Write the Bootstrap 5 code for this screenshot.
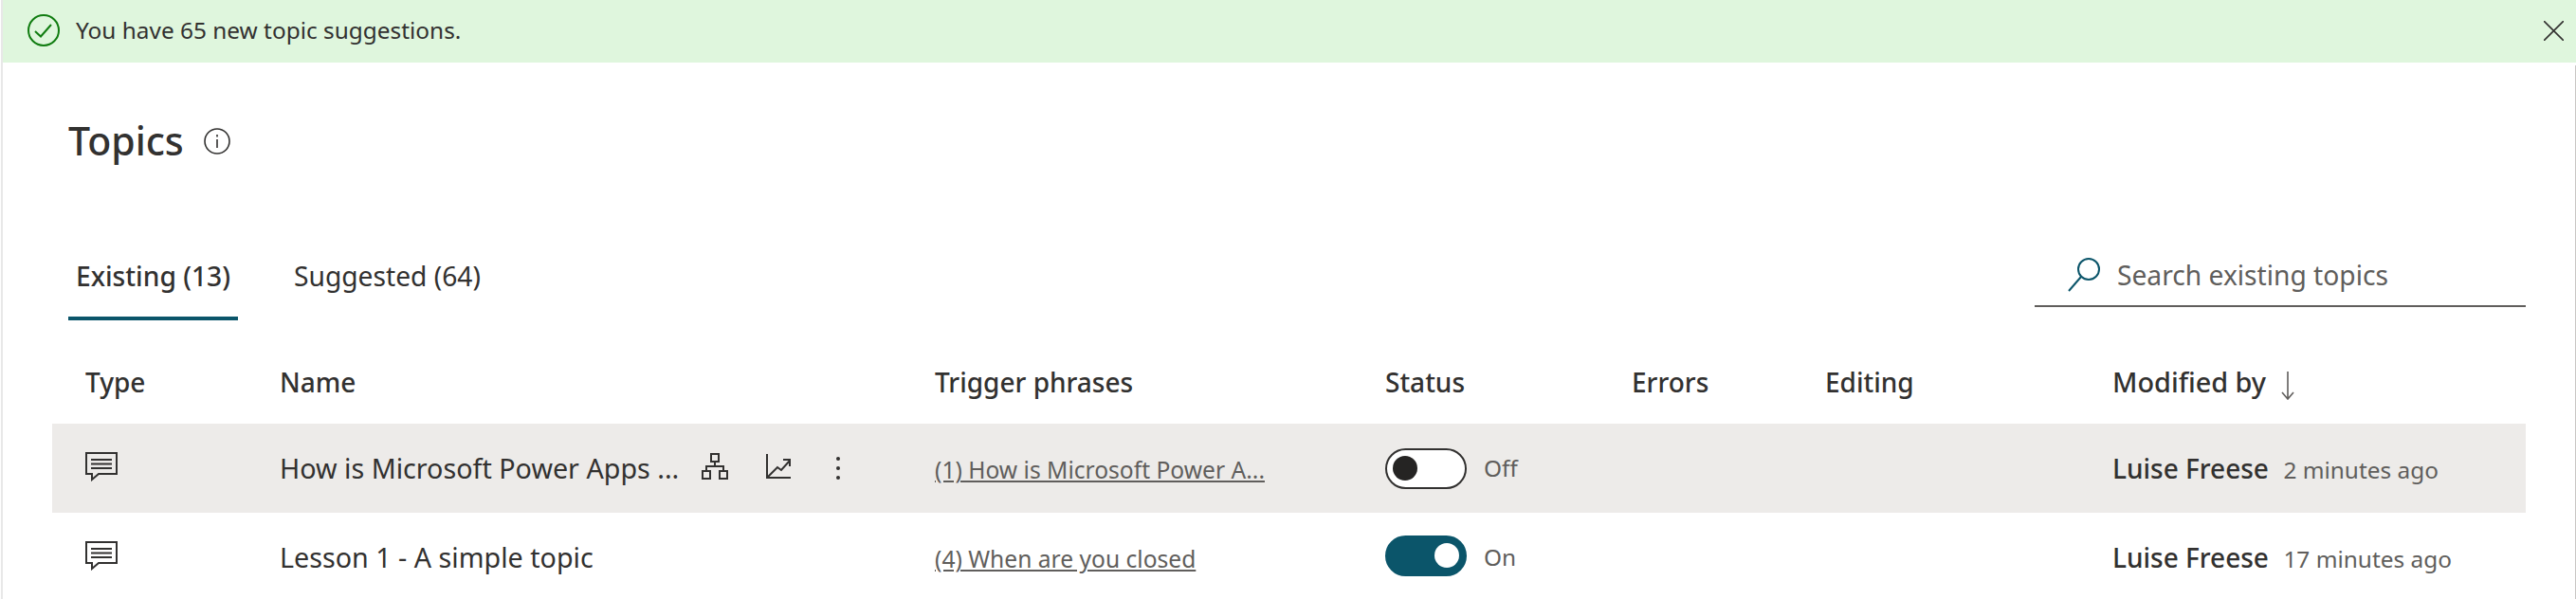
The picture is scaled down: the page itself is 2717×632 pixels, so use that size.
<!DOCTYPE html>
<html lang="en">
<head>
<meta charset="UTF-8">
<title>Topics</title>
<link href="https://cdn.jsdelivr.net/npm/bootstrap@5.3.0/dist/css/bootstrap.min.css" rel="stylesheet">
<style>
html, body { height: 100%; overflow: hidden; }
body { font-family: "Noto Sans", "Open Sans", sans-serif; color: #323130; font-size: 28.2px; background: #fff; }
.page-frame { height: 632px; margin-left: 1px; border-left: 2px solid #e8e8e8; }
.success-bar { height: 66px; background: #dff6dd; padding: 0 13px 2px 26px; gap: 17px; font-size: 24.4px; }
.success-bar .close-x { margin-left: auto; }
.page-body { margin-top: 3px; border-right: 1px solid #c8c6c4; height: 563px; }
.topics-title { padding: 7px 0 0 69px; height: 153px; gap: 21px; }
.topics-title h1 { font-size: 41px; font-weight: 500; margin: 0 0 2px; line-height: 54px; }
.tab-row { padding: 0 52px 0 69px; height: 116px; }
.topic-tab { padding: 42px 8px 0; height: 116px; line-height: 54px; margin-right: 51px; position: relative; }
.topic-tab.active-tab { font-weight: 500; }
.topic-tab.active-tab::after { content: ""; position: absolute; left: 0; right: 0; bottom: 0; height: 4px; background: #0b556a; }
.search-box { width: 518px; height: 72px; margin-top: 30px; border-bottom: 2px solid #605e5c; padding: 6px 0 0 35px; gap: 18px; color: #605e5c; }
.topics-table { table-layout: fixed; width: 2609px; margin: 0 0 0 52px; border-collapse: collapse; }
.topics-table th { font-weight: 500; font-size: 28px; height: 109px; padding: 21px 0 0; vertical-align: middle; }
.topics-table th.sorted-head { font-size: 28.8px; }
.topics-table td { height: 94px; padding: 0; vertical-align: middle; font-size: 28.7px; }
.topics-table .first-cell { padding-left: 35px; }
.row-hover td { background: #edebe9; }
.name-cell { gap: 24px; }
.phrase-link { color: #605e5c; font-size: 24.6px; text-decoration: underline; }
.status-cell { gap: 18px; }
.fake-toggle { width: 86px; height: 43px; border: 2px solid #323130; background: #fff; border-radius: 22px; padding: 0 6px; }
.fake-toggle span { width: 26px; height: 26px; border-radius: 50%; background: #252423; }
.fake-toggle.is-on { background: #0b556a; border-color: #0b556a; justify-content: flex-end; }
.fake-toggle.is-on span { background: #fff; }
.topics-table .modifier { font-weight: 500; font-size: 28px; }
.topics-table .muted-text { color: #605e5c; font-size: 24.4px; }
</style>
</head>
<body>
<div class="page-frame">
  <div class="success-bar d-flex align-items-center">
    <svg width="34" height="34" viewBox="0 0 34 34" fill="none" stroke="#107c10" stroke-width="2"><circle cx="17" cy="17" r="16"/><path d="M8 18l6 5.500L25 11"/></svg>
    <span>You have 65 new topic suggestions.</span>
    <svg class="close-x" width="21" height="21" viewBox="0 0 21 21" stroke="#323130" stroke-width="1.6"><path d="M0 0l21 21M21 0L0 21"/></svg>
  </div>
  <div class="page-body">
    <div class="topics-title d-flex align-items-center">
      <h1>Topics</h1>
      <svg width="28" height="28" viewBox="0 0 28 28" fill="none" stroke="#323130" stroke-width="1.6"><circle cx="14" cy="14" r="13"/><path d="M14 12v9M14 7v2.500"/></svg>
    </div>
    <div class="tab-row d-flex">
      <div class="topic-tab active-tab">Existing (13)</div>
      <div class="topic-tab">Suggested (64)</div>
      <div class="search-box d-flex align-items-center ms-auto">
        <svg width="34" height="36" viewBox="0 0 34 36" fill="none" stroke="#0b556a" stroke-width="2"><circle cx="22" cy="12" r="11"/><path d="M14 20L1 35"/></svg>
        <span>Search existing topics</span>
      </div>
    </div>
    <table class="topics-table">
      <colgroup><col style="width:240px"><col style="width:691px"><col style="width:475px"><col style="width:260px"><col style="width:204px"><col style="width:303px"><col style="width:436px"></colgroup>
      <thead>
        <tr>
          <th class="first-cell">Type</th><th>Name</th><th>Trigger phrases</th><th>Status</th><th>Errors</th><th>Editing</th>
          <th class="sorted-head">Modified by <svg class="ms-2" width="14" height="30" viewBox="0 0 14 30" fill="none" stroke="#605e5c" stroke-width="1.6"><path d="M7 0v29M1 22l6 7 6-7"/></svg></th>
        </tr>
      </thead>
      <tbody>
        <tr class="row-hover">
          <td class="first-cell"><svg class="mb-2" width="34" height="31" viewBox="0 0 34 31" fill="none" stroke="#323130" stroke-width="2"><path d="M1 1h32v22H14l-7 6v-6H1z"/><path d="M6 8h22M6 12.500h22M6 17h22"/></svg></td>
          <td><div class="name-cell d-flex align-items-center">
            <span>How is Microsoft Power Apps ...</span>
            <svg class="mb-1" width="28" height="28" viewBox="0 0 28 28" fill="none" stroke="#323130" stroke-width="2"><path d="M10 1h8v8h-8zM1 19h8v8H1zM19 19h8v8h-8zM14 9v5M5 19v-5h18v5"/></svg>
            <svg class="ms-3 mb-1" width="26" height="26" viewBox="0 0 26 26" fill="none" stroke="#323130" stroke-width="2"><path d="M1 0v25h25M1 25l11-11 4 3 9-10M18 6h7v7"/></svg>
            <svg class="ms-4" width="4" height="24" viewBox="0 0 4 24" fill="#323130"><circle cx="2" cy="2" r="2"/><circle cx="2" cy="12" r="2"/><circle cx="2" cy="22" r="2"/></svg>
          </div></td>
          <td><a class="phrase-link" href="#">(1) How is Microsoft Power A...</a></td>
          <td><div class="status-cell d-flex align-items-center"><div class="fake-toggle d-flex align-items-center"><span></span></div><span class="muted-text">Off</span></div></td>
          <td></td><td></td>
          <td><span class="modifier">Luise Freese</span> <span class="muted-text ms-2">2 minutes ago</span></td>
        </tr>
        <tr>
          <td class="first-cell"><svg class="mb-2" width="34" height="31" viewBox="0 0 34 31" fill="none" stroke="#323130" stroke-width="2"><path d="M1 1h32v22H14l-7 6v-6H1z"/><path d="M6 8h22M6 12.500h22M6 17h22"/></svg></td>
          <td>Lesson 1 - A simple topic</td>
          <td><a class="phrase-link" href="#">(4) When are you closed</a></td>
          <td><div class="status-cell d-flex align-items-center"><div class="fake-toggle is-on d-flex align-items-center mb-1"><span></span></div><span class="muted-text">On</span></div></td>
          <td></td><td></td>
          <td><span class="modifier">Luise Freese</span> <span class="muted-text ms-2">17 minutes ago</span></td>
        </tr>
      </tbody>
    </table>
  </div>
</div>
<script src="https://cdn.jsdelivr.net/npm/bootstrap@5.3.0/dist/js/bootstrap.bundle.min.js"></script>
</body>
</html>
